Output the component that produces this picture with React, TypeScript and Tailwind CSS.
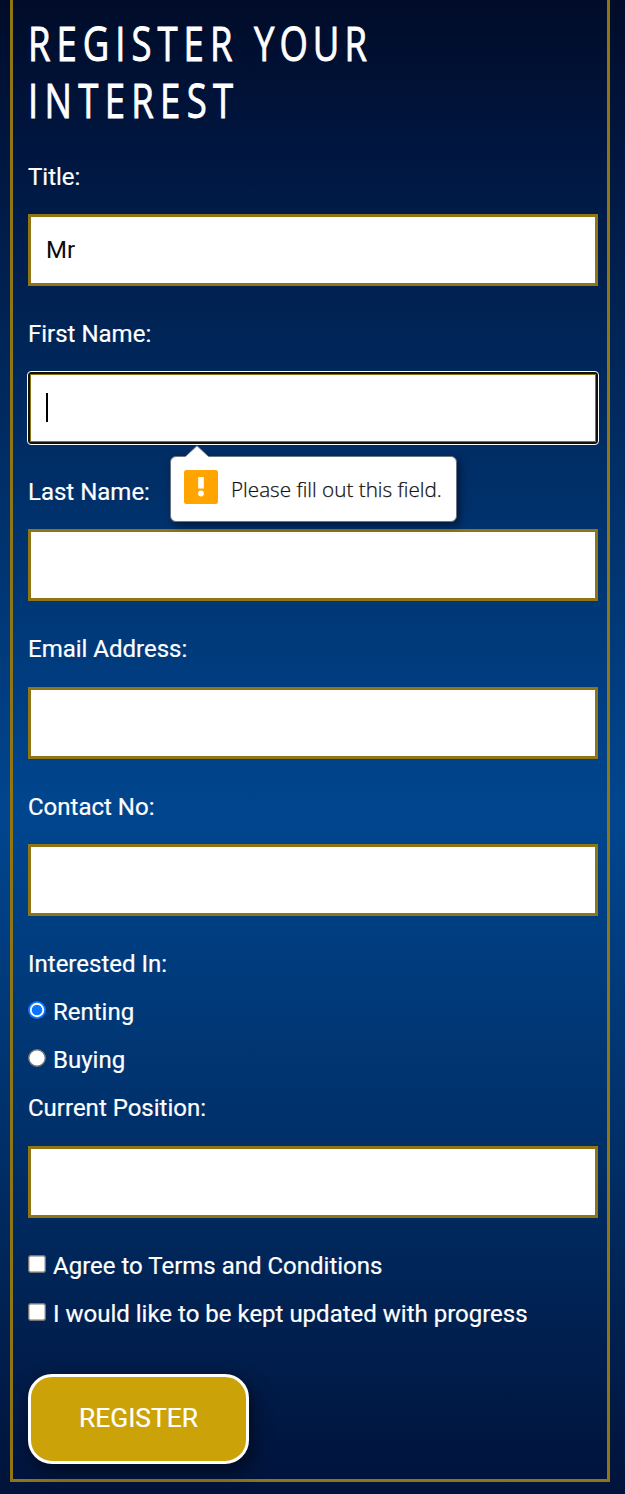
import React from "react";

function Field({ label, value = "" }: { label: string; value?: string }) {
  return (
    <div className="mb-6">
      <label className="block h-12 leading-[48px]">{label}</label>
      <div className="mt-[13.5px] flex h-[72px] items-center border-[3px] border-[#8f7513] bg-white px-[15px] text-[#0c0c0c] [-webkit-text-stroke:0px]">
        {value}
      </div>
    </div>
  );
}

function ActiveField({ label }: { label: string }) {
  return (
    <div className="relative mb-6">
      <label className="block h-12 leading-[48px]">{label}</label>
      <div className="mt-[13.5px] flex h-[72px] items-center rounded-[3px] border-2 border-[#101010] bg-white px-[16px] shadow-[inset_0_0_0_1px_#8f7513] outline-1 outline-white">
        <span className="h-[29px] w-[2px] bg-black" />
      </div>
      <Tooltip />
    </div>
  );
}

function Tooltip() {
  return (
    <div className="absolute left-[142px] top-[146px] z-10 flex h-[66px] w-[287px] items-center rounded-[6px] border border-[#6b7480] bg-white pb-[1px] pl-[13px] shadow-[3px_4px_8px_rgba(0,0,0,0.45)]">
      <svg className="absolute -top-[12px] left-[14px]" width="24" height="14" viewBox="0 0 24 14">
        <path d="M0 14V12L12 .7 24 12V14Z" fill="#fff" />
        <path d="M.5 11.5 12 .7l11.500 10.800" fill="none" stroke="#6b7480" strokeWidth="1" />
      </svg>
      <svg className="mb-[3px] shrink-0" width="34" height="34" viewBox="0 0 34 34">
        <rect width="34" height="34" rx="2.500" fill="#ffa400" />
        <path d="M14.200 7h5.600v11.500h-5.600z" fill="#fff" />
        <circle cx="17" cy="23.500" r="2.900" fill="#fff" />
      </svg>
      <span className="ml-[13px] mt-[1px] whitespace-nowrap font-['Open_Sans',sans-serif] text-[20.7px] font-light leading-[30px] text-[#111] [-webkit-text-stroke:0.25px]">
        Please fill out this field.
      </span>
    </div>
  );
}

function Choice({ label, round = false, selected = false }: { label: string; round?: boolean; selected?: boolean }) {
  return (
    <div className="flex h-12 items-center">
      <svg className="relative -top-[2px] mr-[7px] shrink-0" width="18" height="18" viewBox="0 0 18 18">
        {round ? (
          selected ? (
            <>
              <circle cx="9" cy="9" r="9" fill="#0b75ff" />
              <circle cx="9" cy="9" r="7.200" fill="#fff" />
              <circle cx="9" cy="9" r="5.300" fill="#0b75ff" />
            </>
          ) : (
            <circle cx="9" cy="9" r="8.300" fill="#fff" stroke="#767676" strokeWidth="1.400" />
          )
        ) : (
          <rect x=".7" y=".7" width="16.600" height="16.600" rx="2" fill="#fff" stroke="#767676" strokeWidth="1.400" />
        )}
      </svg>
      <span className="whitespace-nowrap">{label}</span>
    </div>
  );
}

export default function App() {
  return (
    <main className="h-[1494px] w-[625px] overflow-hidden bg-[linear-gradient(to_bottom,#000c29_0px,#001640_150px,#002557_340px,#00468f_815px,#002e66_1160px,#001640_1450px,#00133a_1494px)] pl-[10px] font-['Roboto',sans-serif] text-[24px] text-white [-webkit-text-stroke:0.2px]">
      <section className="h-[1482px] w-[600px] border-x-[3px] border-b-[3px] border-[#8f7513] px-[15px] pr-[9px] pt-[14px]">
        <h1 className="mb-[24.9px] h-[114px] w-[560px] origin-left scale-x-[0.76] whitespace-nowrap font-['Open_Sans',sans-serif] text-[48px] font-normal leading-[57px] [-webkit-text-stroke:0.9px]">
          <span className="tracking-[7.9px]">REGISTER </span>
          <span className="tracking-[6.7px]">YOUR</span>
          <br />
          <span className="tracking-[8.3px]">INTEREST</span>
        </h1>
        <form>
          <Field label="Title:" value="Mr" />
          <ActiveField label="First Name:" />
          <Field label="Last Name:" />
          <Field label="Email Address:" />
          <Field label="Contact No:" />
          <p className="h-12 leading-[48px]">Interested In:</p>
          <Choice label="Renting" round selected />
          <Choice label="Buying" round />
          <Field label="Current Position:" />
          <Choice label="Agree to Terms and Conditions" />
          <Choice label="I would like to be kept updated with progress" />
          <button
            type="button"
            className="mt-[36px] h-[90px] w-[221px] rounded-[24px] border-[3px] border-white bg-[#cba208] pb-[1px] text-[26.400px] shadow-[4px_6px_18px_rgba(0,0,0,0.5)]"
          >
            REGISTER
          </button>
        </form>
      </section>
    </main>
  );
}
